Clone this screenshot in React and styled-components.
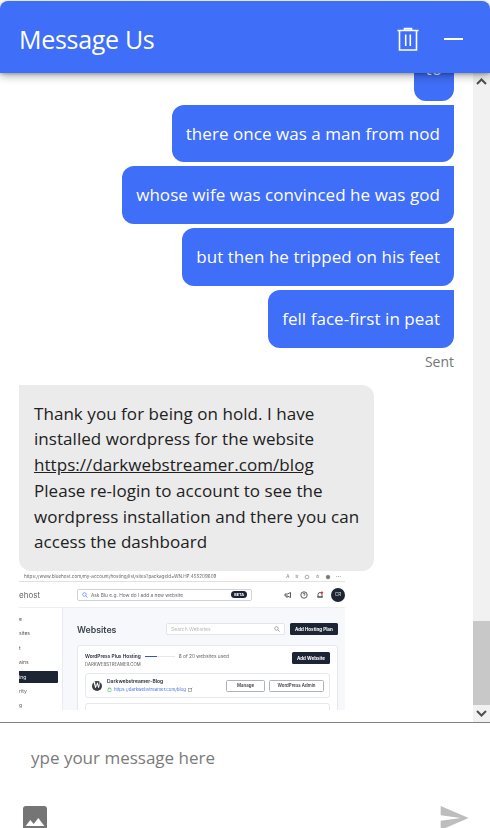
import styled, { createGlobalStyle } from "styled-components";

const GlobalStyle = createGlobalStyle`
    html, body {
        margin: 0;
        padding: 0;
        background: #fff;
    }
    * {
        box-sizing: border-box;
    }
`;

const Page = styled.div`
    width: 490px;
    height: 828px;
    display: flex;
    flex-direction: column;
    overflow: hidden;
    padding-top: 1px;
    font-family: "Open Sans", "Noto Sans", sans-serif;
    color: #212121;
`;

const Header = styled.header`
    position: relative;
    z-index: 2;
    flex: 0 0 72px;
    display: flex;
    align-items: center;
    padding: 3px 27px 0 19px;
    background: #3f6ef8;
    color: #fff;
    border-radius: 8px 8px 0 0;
    box-shadow: 0 3px 8px 0 rgba(0, 0, 0, .32), 0 1px 3px 0 rgba(0, 0, 0, .2);
`;

const Title = styled.h1`
    flex: 1;
    margin: 0;
    font-size: 25px;
    font-weight: 400;
    letter-spacing: -.3px;
`;

const HeaderIcon = styled.svg`
    display: block;
    margin-left: ${(p) => p.$gap || 0}px;
`;

const Middle = styled.div`
    flex: 1;
    min-height: 0;
    display: flex;
`;

const MessageList = styled.div`
    flex: 1;
    min-width: 0;
    display: flex;
    flex-direction: column;
    justify-content: flex-end;
    overflow: hidden;
    padding: 0 19px 12px;
`;

const Bubble = styled.div`
    font-size: 17px;
    line-height: 25.74px;
    letter-spacing: .05px;
`;

const Outgoing = styled(Bubble)`
    flex: none;
    align-self: flex-end;
    margin-bottom: 4px;
    padding: ${(p) => (p.$clipped ? "13px 12px 19px" : "16px 14px")};
    background: #3f6ef8;
    color: #fff;
    border-radius: 12px 0 12px 12px;
`;

const Status = styled.div`
    flex: none;
    align-self: flex-end;
    margin: 0 0 13px;
    font-size: 14px;
    line-height: 20px;
    color: #757575;
`;

const Incoming = styled(Bubble)`
    flex: none;
    width: 355px;
    padding: 16px 8px 16px 15px;
    background: #ebebeb;
    border-radius: 0 12px 12px 12px;

    a {
        color: inherit;
    }
`;

const Scrollbar = styled.div`
    flex: 0 0 17px;
    display: flex;
    flex-direction: column;
    background: #f1f1f1;
`;

const ScrollArrow = styled.div`
    flex: 0 0 17px;
    display: flex;
    align-items: center;
    justify-content: center;
`;

const ScrollGap = styled.div`
    flex: 1;
`;

const ScrollThumb = styled.div`
    flex: 0 0 84px;
    background: #c8c8c8;
`;

const Composer = styled.footer`
    flex: 0 0 106px;
    min-height: 0;
    overflow: hidden;
    border-top: 1px solid #808080;
    padding: 0 20px 0 19px;
`;

const MessageInput = styled.input`
    display: block;
    width: 100%;
    height: 68px;
    margin: 0 0 11px;
    padding: 0 12px;
    border: 0;
    outline: 0;
    background: transparent;
    font-family: inherit;
    font-size: 17px;

    &::placeholder {
        color: #7a7a7a;
        opacity: 1;
    }
`;

const ComposerActions = styled.div`
    display: flex;
    justify-content: space-between;
`;

const Shot = styled.div`
    flex: none;
    width: 326px;
    height: 138px;
    margin-top: 1px;
    overflow: hidden;
    display: flex;
    flex-direction: column;
    background: #fff;
    font-family: Inter, sans-serif;
    color: #1d2433;
    filter: blur(.5px);
`;

const ShotAddress = styled.div`
    flex: 0 0 10px;
    display: flex;
    align-items: center;
    justify-content: space-between;
    padding: 0 4px 0 5px;
    border-bottom: 1px solid #e2e2e2;
    font-size: 4.6px;
    color: #666;
`;

const AddressTools = styled.div`
    display: flex;
    align-items: center;
    gap: 5px;
    color: #777;
`;

const ShotTop = styled.div`
    flex: 0 0 26px;
    display: flex;
    align-items: center;
    border-bottom: 1px solid #eceef2;
`;

const Brand = styled.div`
    flex: 0 0 58px;
    font-size: 8px;
    color: #666;
`;

const AskBox = styled.div`
    flex: 0 0 175px;
    height: 12px;
    display: flex;
    align-items: center;
    padding: 0 4px;
    border: 1px solid #cfd2d8;
    border-radius: 2px;
    font-size: 4.8px;
    color: #666;
`;

const AskText = styled.span`
    flex: 1;
    margin-left: 3px;
`;

const BetaTag = styled.span`
    padding: 1px 3px;
    border-radius: 4px;
    background: #1d2433;
    color: #fff;
    font-size: 3.8px;
    font-weight: 700;
`;

const TopIcons = styled.div`
    flex: 1;
    display: flex;
    align-items: center;
    justify-content: flex-end;
    gap: 8px;
    color: #333;
`;

const Avatar = styled.div`
    width: 14px;
    height: 14px;
    margin-left: -1px;
    display: flex;
    align-items: center;
    justify-content: center;
    border-radius: 50%;
    background: #1d2433;
    color: #ddd;
    font-size: 4.6px;
`;

const ShotBody = styled.div`
    flex: 1;
    display: flex;
    min-height: 0;
`;

const Sidebar = styled.div`
    flex: 0 0 44px;
    padding-top: 5px;
    border-right: 1px solid #e9ebf0;
    font-size: 5px;
    color: #555;
`;

const SideItem = styled.div`
    width: 39px;
    height: 12px;
    margin-bottom: 2.4px;
    line-height: 12px;
    background: ${(p) => (p.$active ? "#1d2433" : "transparent")};
    color: ${(p) => (p.$active ? "#fff" : "inherit")};
    border-radius: 0 1px 1px 0;
`;

const ShotMain = styled.div`
    flex: 1;
    min-width: 0;
    padding: 15px 7px 0 14px;
    background: #f7f8fc;
`;

const MainHead = styled.div`
    display: flex;
    align-items: center;
    margin-bottom: 10px;
`;

const MainTitle = styled.div`
    flex: 0 0 89px;
    font-size: 8.8px;
    font-weight: 600;
    color: #3a4150;
`;

const SearchBox = styled.div`
    flex: 0 0 119px;
    height: 12px;
    display: flex;
    align-items: center;
    justify-content: space-between;
    margin-right: 5px;
    padding: 0 4px;
    background: #fff;
    border: 1px solid #e3e5ea;
    border-radius: 2px;
    font-size: 5px;
    color: #bbb;
`;

const DarkButton = styled.div`
    flex: none;
    height: 12px;
    display: flex;
    align-items: center;
    padding: 0 5px;
    border-radius: 1.5px;
    background: #1d2433;
    color: #fff;
    font-size: 4.5px;
    font-weight: 700;
`;

const HostingCard = styled.div`
    padding: 6px 7px;
    background: #fff;
    border: 1px solid #e6e8ee;
    border-radius: 3px;
`;

const HostingRow = styled.div`
    display: flex;
    justify-content: space-between;
    margin-bottom: 4px;
`;

const PlanLine = styled.div`
    display: flex;
    align-items: center;
    gap: 4px;
    font-size: 4.8px;
    font-weight: 600;
    line-height: 9px;
`;

const PlanUsage = styled.span`
    font-weight: 400;
    color: #666;
`;

const PlanBar = styled.div`
    width: 30px;
    height: 1.4px;
    background: #e5e7eb;

    &::before {
        content: "";
        display: block;
        width: 12px;
        height: 1.4px;
        background: #2f55d4;
    }
`;

const PlanDomain = styled.div`
    font-size: 4.3px;
    line-height: 8px;
    color: #555;
`;

const SiteCard = styled.div`
    display: flex;
    align-items: center;
    height: 25px;
    margin-bottom: 5px;
    padding: 0 5px 0 6px;
    border: 1px solid #e6e8ee;
    border-radius: 3px;
`;

const WpLogo = styled.div`
    flex: none;
    width: 10px;
    height: 10px;
    margin-right: 5px;
    border-radius: 50%;
    background: #3a3f47;
    color: #fff;
    font-family: "Liberation Serif", serif;
    font-size: 8px;
    font-weight: 700;
    line-height: 10px;
    text-align: center;
`;

const SiteInfo = styled.div`
    flex: 1;
    font-size: 5px;
    font-weight: 600;
    line-height: 7.5px;
`;

const SiteLink = styled.div`
    display: flex;
    align-items: center;
    gap: 2px;
    font-size: 4.4px;
    font-weight: 400;
    color: #4a6fdc;
`;

const OutlineButton = styled.div`
    flex: none;
    width: ${(p) => p.$width}px;
    height: 12px;
    display: flex;
    align-items: center;
    justify-content: center;
    margin-left: 4px;
    border: 1px solid #aeb2ba;
    border-radius: 1.5px;
    font-size: 4.4px;
    font-weight: 600;
    color: #444;
`;

const TinyIcon = ({ size = 6, color = "currentColor", children }) => (
    <svg width={size} height={size} viewBox="0 0 8 8" fill="none" stroke={color} strokeWidth=".8">
        {children}
    </svg>
);

const ScreenshotAttachment = () => (
    <Shot>
        <ShotAddress>
            <span>https://www.bluehost.com/my-account/hosting/list/sites?packageId=WN.HP.455209609</span>
            <AddressTools>
                <span>A</span>
                <span>☆</span>
                <TinyIcon><circle cx="4" cy="4" r="2.5" /></TinyIcon>
                <span>☆</span>
                <TinyIcon><circle cx="4" cy="4" r="2.5" fill="#777" /></TinyIcon>
                <span>⋯</span>
            </AddressTools>
        </ShotAddress>
        <ShotTop>
            <Brand>ehost</Brand>
            <AskBox>
                <TinyIcon color="#3f6ef8"><circle cx="3.3" cy="3.3" r="2.4" /><path d="M5 5l2.5 2.5" /></TinyIcon>
                <AskText>Ask Blu e.g. How do I add a new website</AskText>
                <BetaTag>BETA</BetaTag>
            </AskBox>
            <TopIcons>
                <TinyIcon size={8}><path d="M1 3h2.5L6.5 1.5v5L3.5 5H1zM3 5v2" /></TinyIcon>
                <TinyIcon size={8}><circle cx="4" cy="4" r="3.2" /><path d="M3 3.2c0-1.3 2-1.3 2 0 0 .8-1 .8-1 1.6" /></TinyIcon>
                <TinyIcon size={8}><path d="M2 6V3.5a2 2 0 0 1 4 0V6zM1 6h6" /><circle cx="6" cy="1.6" r="1.2" fill="#e0313f" stroke="none" /></TinyIcon>
                <Avatar>CR</Avatar>
            </TopIcons>
        </ShotTop>
        <ShotBody>
            <Sidebar>
                <SideItem>e</SideItem>
                <SideItem>sites</SideItem>
                <SideItem>t</SideItem>
                <SideItem>ains</SideItem>
                <SideItem $active>ing</SideItem>
                <SideItem>rity</SideItem>
                <SideItem>g</SideItem>
            </Sidebar>
            <ShotMain>
                <MainHead>
                    <MainTitle>Websites</MainTitle>
                    <SearchBox>
                        <span>Search Websites</span>
                        <TinyIcon color="#777"><circle cx="3.3" cy="3.3" r="2.4" /><path d="M5 5l2.5 2.5" /></TinyIcon>
                    </SearchBox>
                    <DarkButton>Add Hosting Plan</DarkButton>
                </MainHead>
                <HostingCard>
                    <HostingRow>
                        <div>
                            <PlanLine>
                                WordPress Plus Hosting
                                <PlanBar />
                                <PlanUsage>8 of 20 websites used</PlanUsage>
                            </PlanLine>
                            <PlanDomain>DARKWEBSTREAMER.COM</PlanDomain>
                        </div>
                        <DarkButton>Add Website</DarkButton>
                    </HostingRow>
                    <SiteCard>
                        <WpLogo>W</WpLogo>
                        <SiteInfo>
                            Darkwebstreamer-Blog
                            <SiteLink>
                                <TinyIcon size={5} color="#4caf50"><rect x="1.5" y="3" width="5" height="4" /><path d="M2.5 3V1.5h3V3" /></TinyIcon>
                                https://darkwebstreamer.com/blog
                                <TinyIcon size={5} color="#777"><rect x="1" y="2" width="5" height="5" /><path d="M4 4l3-3" /></TinyIcon>
                            </SiteLink>
                        </SiteInfo>
                        <OutlineButton $width={39}>Manage</OutlineButton>
                        <OutlineButton $width={55}>WordPress Admin</OutlineButton>
                    </SiteCard>
                    <SiteCard />
                </HostingCard>
            </ShotMain>
        </ShotBody>
    </Shot>
);

export default function App() {
    return (
        <Page>
            <GlobalStyle />
            <Header>
                <Title>Message Us</Title>
                <HeaderIcon width="22" height="24" viewBox="0 0 22 24" fill="none" stroke="#fff" strokeWidth="1.6">
                    <path d="M0.5 3.5h21M7.5 3.2V1.6h7v1.6M2.5 3.5V23h17V3.5M8.7 7.5v11.5M13.3 7.5v11.5" />
                </HeaderIcon>
                <HeaderIcon $gap={25} width="19" height="4" viewBox="0 0 19 4" fill="#fff">
                    <rect y="1" width="19" height="2" />
                </HeaderIcon>
            </Header>
            <Middle>
                <MessageList>
                    <Outgoing $clipped>to</Outgoing>
                    <Outgoing>there once was a man from nod</Outgoing>
                    <Outgoing>whose wife was convinced he was god</Outgoing>
                    <Outgoing>but then he tripped on his feet</Outgoing>
                    <Outgoing>fell face-first in peat</Outgoing>
                    <Status>Sent</Status>
                    <Incoming>
                        Thank you for being on hold. I have installed wordpress for the website{" "}
                        <a href="#blog">https://darkwebstreamer.com/blog</a>
                        <br />
                        Please re-login to account to see the wordpress installation and there you can access the dashboard
                    </Incoming>
                    <ScreenshotAttachment />
                </MessageList>
                <Scrollbar>
                    <ScrollArrow>
                        <svg width="11" height="7" viewBox="0 0 11 7" fill="none" stroke="#505050" strokeWidth="2">
                            <path d="M1 6l4.5-4.5L10 6" />
                        </svg>
                    </ScrollArrow>
                    <ScrollGap />
                    <ScrollThumb />
                    <ScrollArrow>
                        <svg width="11" height="7" viewBox="0 0 11 7" fill="none" stroke="#505050" strokeWidth="2">
                            <path d="M1 1l4.5 4.5L10 1" />
                        </svg>
                    </ScrollArrow>
                </Scrollbar>
            </Middle>
            <Composer>
                <MessageInput placeholder="ype your message here" />
                <ComposerActions>
                    <svg width="32" height="32" viewBox="0 0 24 24" fill="#757575">
                        <path d="M21 19V5c0-1.1-.9-2-2-2H5c-1.1 0-2 .9-2 2v14c0 1.1.9 2 2 2h14c1.1 0 2-.9 2-2zM8.5 13.5l2.5 3.01L14.5 12l4.5 6H5l3.5-4.5z" />
                    </svg>
                    <svg width="32" height="32" viewBox="0 0 24 24" fill="#bdbdbd">
                        <path d="M2.01 21L23 12 2.01 3 2 10l15 2-15 2z" />
                    </svg>
                </ComposerActions>
            </Composer>
        </Page>
    );
}
